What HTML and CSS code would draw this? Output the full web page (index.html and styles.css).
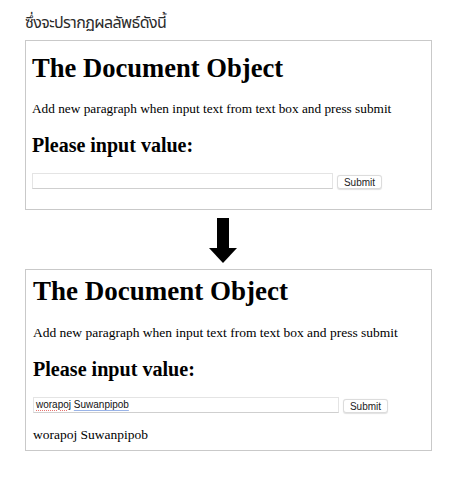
FILE: index.html
```html
<!DOCTYPE html>
<html lang="th">
<head>
<meta charset="utf-8">
<title>The Document Object</title>
<link rel="stylesheet" href="styles.css">
</head>
<body>
<div class="page">
  <p class="caption">ซึ่งจะปรากฏผลลัพธ์ดังนี้</p>

  <section class="shot shot-before">
    <h1 class="title">The Document Object</h1>
    <p class="text">Add new paragraph when input text from text box and press submit</p>
    <h2 class="subtitle">Please input value:</h2>
    <div class="form-row">
      <div class="field"></div>
      <span class="button">Submit</span>
    </div>
  </section>

  <div class="arrow-row">
    <svg class="arrow" width="28" height="46" viewBox="0 0 28 46">
      <rect x="8" y="0" width="12" height="31" fill="#000"/>
      <polygon points="0,30 28,30 14,45" fill="#000"/>
    </svg>
  </div>

  <section class="shot shot-after">
    <h1 class="title">The Document Object</h1>
    <p class="text">Add new paragraph when input text from text box and press submit</p>
    <h2 class="subtitle">Please input value:</h2>
    <div class="form-row">
      <div class="field"><span class="spell">worapoj</span> <span class="grammar">Suwanpipob</span></div>
      <span class="button">Submit</span>
    </div>
    <p class="text output">worapoj Suwanpipob</p>
  </section>
</div>
</body>
</html>
```

FILE: styles.css
```css
html, body {
  margin: 0;
  padding: 0;
  background: #ffffff;
}

.page {
  width: 475px;
  padding: 0 0 0 25px;
  box-sizing: border-box;
  display: flex;
  flex-direction: column;
}

.caption {
  margin: 11px 0 0 0;
  height: 29px;
  line-height: 22px;
  font-family: "Noto Sans", "Noto Sans Thai", "Noto Sans CJK SC", sans-serif;
  font-size: 16px;
  letter-spacing: -0.6px;
  color: #2b2b2b;
}

.shot {
  width: 407px;
  box-sizing: border-box;
  border: 1px solid #c9c9c9;
  font-family: "Liberation Serif", "Times New Roman", serif;
  color: #000;
  display: flex;
  flex-direction: column;
}

.shot-before {
  padding: 12px 6px 20px 6px;
}

.shot-after {
  padding: 6px 6px 7px 7px;
}

.title {
  margin: 0;
  font-size: 26.6px;
  line-height: 30px;
  font-weight: bold;
}

.text {
  margin: 0;
  font-size: 13.3px;
  line-height: 16px;
}

.subtitle {
  margin: 0;
  font-size: 20px;
  line-height: 24px;
  font-weight: bold;
}

.shot-before .text { margin-top: 17.5px; }
.shot-before .subtitle { margin-top: 16.5px; }
.shot-before .form-row { margin-top: 16px; }

.shot-after .title { font-size: 27px; }
.shot-after .text { font-size: 13.5px; margin-top: 18.7px; }
.shot-after .subtitle { font-size: 20.1px; margin-top: 16.3px; }
.shot-after .form-row { margin-top: 16.3px; }
.shot-after .output { margin-top: 14px; }

.form-row {
  display: flex;
  align-items: flex-end;
  gap: 4px;
}

.field {
  width: 301px;
  height: 16px;
  box-sizing: border-box;
  border: 1px solid #e4e4e4;
  border-bottom-color: #cfcfcf;
  background: #fff;
  font-family: "Liberation Sans", Arial, sans-serif;
  font-size: 10px;
  line-height: 14px;
  padding: 0 2px;
  color: #111;
  white-space: nowrap;
}

.shot-after .field {
  width: 306px;
}

.spell {
  text-decoration: underline dotted #e8736f;
  text-underline-offset: 2px;
}

.grammar {
  text-decoration: underline solid #9ab4e8;
  text-underline-offset: 2px;
}

.button {
  display: inline-flex;
  align-items: center;
  justify-content: center;
  width: 45px;
  height: 14px;
  box-sizing: border-box;
  border: 1px solid #dcdcdc;
  border-radius: 3px;
  background: #fff;
  box-shadow: 0 0.5px 1px rgba(0,0,0,0.12);
  font-family: "Liberation Sans", Arial, sans-serif;
  font-size: 10px;
  color: #222;
}

.arrow-row {
  width: 407px;
  height: 59px;
  display: flex;
  justify-content: flex-start;
  align-items: flex-start;
  padding: 8px 0 0 184px;
  box-sizing: border-box;
}

.arrow {
  display: block;
}
```
